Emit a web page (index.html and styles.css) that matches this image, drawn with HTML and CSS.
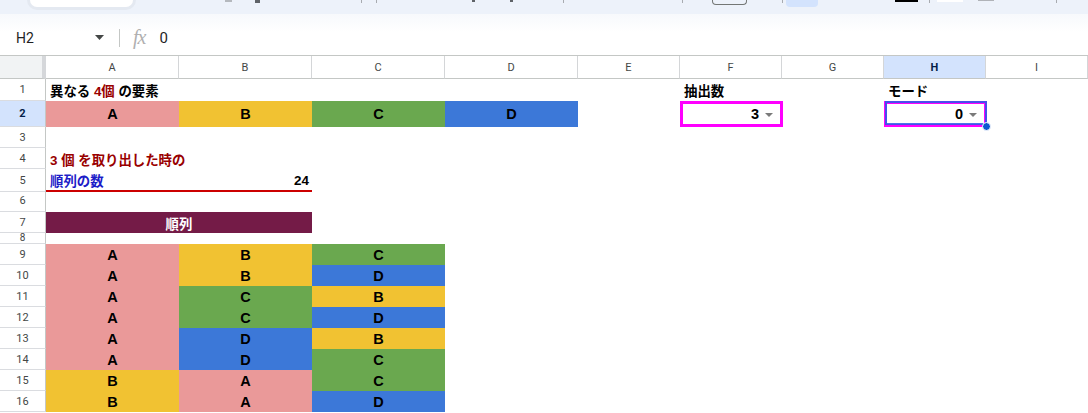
FILE: index.html
```html
<!DOCTYPE html>
<html lang="ja">
<head>
    <meta charset="UTF-8">
    <meta name="viewport" content="width=device-width, initial-scale=1.0">
    <title>順列 - スプレッドシート</title>
    <link rel="stylesheet" href="styles.css">
</head>
<body>
    <!-- top toolbar, only its lower edge is in view -->
    <div class="toolbar">
        <span class="tb-search"></span>
        <span class="tb-bit tb-gray1"></span>
        <span class="tb-bit tb-dark1"></span>
        <span class="tb-sep tb-s1"></span>
        <span class="tb-sep tb-s2"></span>
        <span class="tb-bit tb-dot1"></span>
        <span class="tb-bit tb-dot2"></span>
        <span class="tb-sep tb-s3"></span>
        <span class="tb-sep tb-s4"></span>
        <span class="tb-outline"></span>
        <span class="tb-sep tb-s5"></span>
        <span class="tb-active"></span>
        <span class="tb-bit tb-black"></span>
        <span class="tb-sep tb-s6"></span>
        <span class="tb-bit tb-white"></span>
        <span class="tb-bit tb-gray2"></span>
        <span class="tb-sep tb-s7"></span>
    </div>

    <div class="formula-bar">
        <div class="namebox">
            <span>H2</span>
            <svg class="caret" width="9" height="5" viewBox="0 0 9 5"><path d="M0 0h9L4.5 5z" fill="#444746"/></svg>
        </div>
        <span class="fb-sep"></span>
        <span class="fx">fx</span>
        <span class="fb-value">0</span>
    </div>

    <div class="sheet">
        <div class="row head">
            <div class="corner"></div>
            <div class="colh">A</div>
            <div class="colh">B</div>
            <div class="colh">C</div>
            <div class="colh">D</div>
            <div class="colh">E</div>
            <div class="colh">F</div>
            <div class="colh">G</div>
            <div class="colh sel">H</div>
            <div class="colh">I</div>
        </div>

        <div class="row r1">
            <div class="rh">1</div>
            <div class="cell ca">異なる&nbsp;<span class="dark-red">4個</span>&nbsp;の要素</div>
            <div class="cell cf">抽出数</div>
            <div class="cell ch">モード</div>
        </div>

        <div class="row r2">
            <div class="rh sel">2</div>
            <div class="cell ca letter pink">A</div>
            <div class="cell cb letter yellow">B</div>
            <div class="cell cc letter green">C</div>
            <div class="cell cd letter blue">D</div>
            <div class="cell cf dropdown">
                <span>3</span>
                <svg class="dd-arrow" width="8" height="4" viewBox="0 0 8 4"><path d="M0 0h8L4 4z" fill="#7a7a7a"/></svg>
            </div>
            <div class="cell ch dropdown active">
                <span>0</span>
                <svg class="dd-arrow" width="8" height="4" viewBox="0 0 8 4"><path d="M0 0h8L4 4z" fill="#7a7a7a"/></svg>
                <span class="selection"></span>
                <span class="handle"></span>
            </div>
        </div>

        <div class="row">
            <div class="rh">3</div>
        </div>

        <div class="row">
            <div class="rh">4</div>
            <div class="cell ca dark-red">3 個 を取り出した時の</div>
        </div>

        <div class="row">
            <div class="rh">5</div>
            <div class="cell ca total blue-text">順列の数</div>
            <div class="cell cb total num">24</div>
        </div>

        <div class="row r6">
            <div class="rh">6</div>
        </div>

        <div class="row">
            <div class="rh">7</div>
            <div class="cell ca title">順列</div>
        </div>

        <div class="row r8">
            <div class="rh">8</div>
        </div>

        <div class="row">
            <div class="rh">9</div>
            <div class="cell ca letter pink">A</div>
            <div class="cell cb letter yellow">B</div>
            <div class="cell cc letter green">C</div>
        </div>
        <div class="row">
            <div class="rh">10</div>
            <div class="cell ca letter pink">A</div>
            <div class="cell cb letter yellow">B</div>
            <div class="cell cc letter blue">D</div>
        </div>
        <div class="row">
            <div class="rh">11</div>
            <div class="cell ca letter pink">A</div>
            <div class="cell cb letter green">C</div>
            <div class="cell cc letter yellow">B</div>
        </div>
        <div class="row">
            <div class="rh">12</div>
            <div class="cell ca letter pink">A</div>
            <div class="cell cb letter green">C</div>
            <div class="cell cc letter blue">D</div>
        </div>
        <div class="row">
            <div class="rh">13</div>
            <div class="cell ca letter pink">A</div>
            <div class="cell cb letter blue">D</div>
            <div class="cell cc letter yellow">B</div>
        </div>
        <div class="row">
            <div class="rh">14</div>
            <div class="cell ca letter pink">A</div>
            <div class="cell cb letter blue">D</div>
            <div class="cell cc letter green">C</div>
        </div>
        <div class="row">
            <div class="rh">15</div>
            <div class="cell ca letter yellow">B</div>
            <div class="cell cb letter pink">A</div>
            <div class="cell cc letter green">C</div>
        </div>
        <div class="row">
            <div class="rh">16</div>
            <div class="cell ca letter yellow">B</div>
            <div class="cell cb letter pink">A</div>
            <div class="cell cc letter blue">D</div>
        </div>
    </div>
</body>
</html>
```

FILE: styles.css
```css
* {
    margin: 0;
    padding: 0;
    box-sizing: border-box;
}

body {
    font-family: "Liberation Sans", "Noto Sans CJK JP", sans-serif;
    background: #fff;
    width: 1088px;
    height: 413px;
    overflow: hidden;
}

/* toolbar strip */
.toolbar {
    height: 14px;
    background: #edf2fa;
    display: flex;
    align-items: flex-start;
    overflow: hidden;
}

.toolbar span {
    flex: none;
}

.tb-search {
    margin-left: 30px;
    width: 103px;
    height: 7px;
    background: #fff;
    border-radius: 0 0 12px 12px;
    box-shadow: 0 0 0 3px #e4e9f1;
}

.tb-bit {
    height: 2px;
}

.tb-sep {
    width: 1px;
    height: 3px;
    background: #a8abb0;
}

.tb-gray1 { margin-left: 92px; width: 7px; background: #b5b9be; }
.tb-dark1 { margin-left: 23px; width: 5px; height: 3px; background: #5f6368; }
.tb-s1 { margin-left: 101px; }
.tb-s2 { margin-left: 14px; }
.tb-dot1 { margin-left: 95px; width: 3px; background: #5f6368; }
.tb-dot2 { margin-left: 35px; width: 3px; background: #5f6368; }
.tb-s3 { margin-left: 50px; }
.tb-s4 { margin-left: 118px; }

.tb-outline {
    margin-left: 29px;
    width: 35px;
    height: 5px;
    border: 1px solid #747775;
    border-top: none;
    border-radius: 0 0 4px 4px;
}

.tb-s5 { margin-left: 35px; }

.tb-active {
    margin-left: 3px;
    width: 32px;
    height: 7px;
    background: #d3e3fd;
    border-radius: 0 0 4px 4px;
}

.tb-black { margin-left: 77px; width: 23px; background: #000; }
.tb-s6 { margin-left: 11px; }
.tb-white { margin-left: 7px; width: 26px; background: #fff; }
.tb-gray2 { margin-left: 15px; width: 16px; height: 1px; background: #b0b3b8; }
.tb-s7 { margin-left: 62px; }

/* name box + formula */
.formula-bar {
    height: 41px;
    display: flex;
    align-items: center;
    padding-top: 6px;
    background: linear-gradient(#f7f9fc, #fff 45%);
    font-family: Roboto, "Liberation Sans", sans-serif;
    color: #1f1f1f;
}

.namebox {
    width: 112px;
    display: flex;
    align-items: center;
    justify-content: space-between;
    padding: 0 8px 0 16px;
    font-size: 14px;
}

.fb-sep {
    margin-left: 7px;
    width: 1px;
    height: 18px;
    background: #c4c7c5;
}

.fx {
    margin-left: 13px;
    font-family: "Liberation Serif", serif;
    font-style: italic;
    font-size: 20px;
    color: #b0b0b0;
    letter-spacing: -1px;
}

.fb-value {
    margin-left: 14px;
    font-size: 15px;
}

/* grid */
.sheet {
    border-top: 1px solid #c4c7c5;
}

.row {
    display: grid;
    grid-template-columns: 46px repeat(4, 133px) repeat(5, 102px);
    height: 21px;
}

.row.head { height: 23px; }
.row.r1 { height: 22px; }
.row.r2 { height: 26px; }
.row.r6 { height: 22px; }
.row.r8 { height: 11px; }

.corner {
    background: #f1f3f4;
    border-right: 4px solid #d5d7da;
    border-bottom: 1px solid #c4c7c5;
}

.colh {
    display: flex;
    align-items: center;
    justify-content: center;
    font-family: Roboto, "Liberation Sans", sans-serif;
    font-size: 11px;
    color: #444746;
    border-right: 1px solid #d4d6d8;
    border-bottom: 1px solid #c4c7c5;
}

.rh {
    grid-column: 1;
    display: flex;
    align-items: center;
    justify-content: center;
    font-family: Roboto, "Liberation Sans", sans-serif;
    font-size: 11px;
    color: #444746;
    border-right: 1px solid #c4c7c5;
    border-bottom: 1px solid #dadce0;
    overflow: hidden;
}

.r8 .rh {
    align-items: flex-start;
    font-size: 10px;
    line-height: 10px;
}

.sel {
    background: #d3e3fd;
    color: #041e49;
    font-weight: bold;
}

.cell {
    grid-row: 1;
    display: flex;
    align-items: center;
    padding: 0 4px;
    font-size: 13.4px;
    font-weight: bold;
    color: #000;
    white-space: nowrap;
}

.ca { grid-column: 2; }
.cb { grid-column: 3; }
.cc { grid-column: 4; }
.cd { grid-column: 5; }
.cf { grid-column: 7; }
.ch { grid-column: 9; }

.letter {
    justify-content: center;
    font-size: 14.5px;
}

.pink { background: #ea9999; }
.yellow { background: #f1c232; }
.green { background: #6aa84f; }
.blue { background: #3c78d8; }

.dark-red { color: #990000; }
.blue-text { color: #1c1cc8; }

.total {
    border-bottom: 2px solid #cc0000;
    padding-top: 1px;
}

.num {
    justify-content: flex-end;
    padding-right: 3px;
}

.title {
    grid-column: 2 / span 2;
    justify-content: center;
    background: #741b47;
    color: #fff;
}

/* dropdown chips in F2 / H2 */
.dropdown {
    justify-content: flex-end;
    gap: 6px;
    padding-right: 7px;
    border: 3px solid #ff00ff;
    margin-right: -1px;
    font-size: 14.5px;
}

.dd-arrow {
    margin-top: 1px;
}

.active {
    position: relative;
}

.selection {
    position: absolute;
    top: -3px;
    left: -2px;
    right: -3px;
    bottom: -1px;
    border: 2px solid rgba(40, 92, 230, 0.85);
}

.handle {
    position: absolute;
    right: -7px;
    bottom: -7px;
    width: 9px;
    height: 9px;
    border-radius: 50%;
    background: #0b57d0;
    border: 1px solid #fff;
}
```
